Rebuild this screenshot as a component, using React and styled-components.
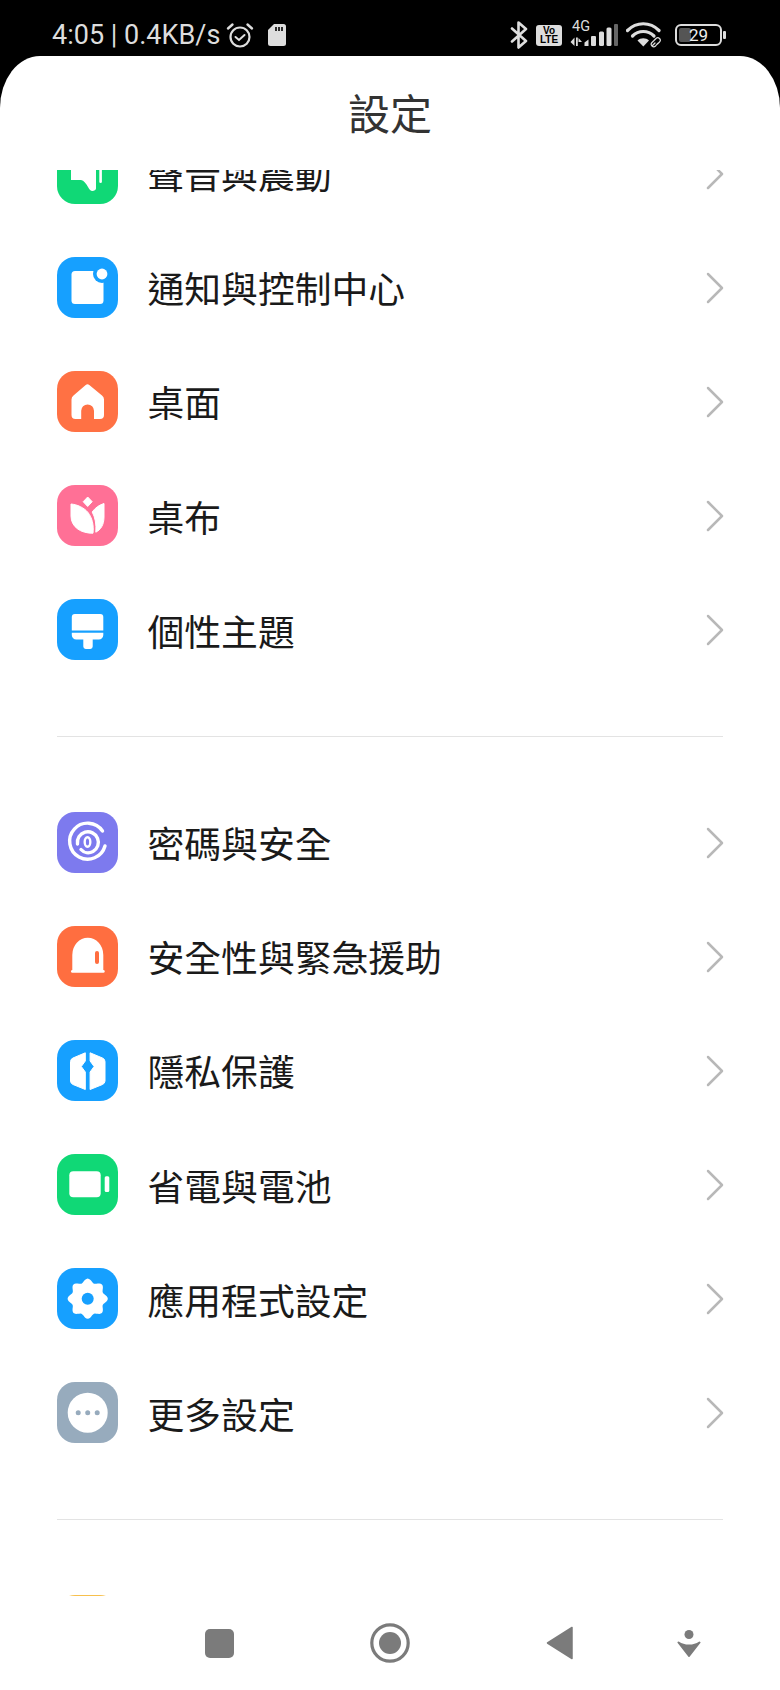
import React from 'react';
import styled, { createGlobalStyle } from 'styled-components';

const GlobalStyle = createGlobalStyle`
  html, body {
    margin: 0;
    padding: 0;
    background: #000;
  }
  * {
    box-sizing: border-box;
  }
`;

const CJK = `"Noto Sans CJK TC", "Noto Sans CJK SC", sans-serif`;

// eight lobed gear outline, used by the app settings icon
const gearPath = () => {
  const pts = [];
  for (let i = 0; i < 96; i++) {
    const a = (i / 96) * Math.PI * 2;
    const r = 18.2 + 1.9 * Math.cos(8 * a);
    pts.push(`${(30.7 + r * Math.sin(a)).toFixed(2)} ${(30.7 - r * Math.cos(a)).toFixed(2)}`);
  }
  return `M${pts.join('L')}Z`;
};

const icons = {
  sound: (
    <>
      <path d="M14 20H39V45.5C39 47 37 48 35.5 48C33.5 48 32.5 46.5 31 44C29 40.5 27 37.5 24 37H14Z" fill="#fff" />
      <rect x="42.3" y="20" width="2.6" height="20" rx="1.3" fill="#fff" />
    </>
  ),
  notify: (
    <>
      <rect x="14.5" y="14" width="32" height="33" rx="3.5" fill="#fff" />
      <circle cx="45" cy="17" r="9" fill="#16a0ff" />
      <circle cx="45" cy="17" r="5.4" fill="#fff" />
    </>
  ),
  home: (
    <path
      d="M28.7 14a3 3 0 0 1 3.6 0L45 24.5a5 5 0 0 1 2 4V44a4 4 0 0 1-4 4H37V39.8a6.4 6.4 0 0 0-12.8 0V48H18.5a4 4 0 0 1-4-4V28.5a5 5 0 0 1 2-4Z"
      fill="#fff"
    />
  ),
  tulip: (
    <>
      <path d="M14 19C20 19.500 27 22.500 31 27.500C35 32.500 37 40 36 48.200C24 48.500 14 42 14 31Z" fill="#fff" stroke="#fff" strokeLinejoin="round" />
      <path d="M47 18.500V32C47 40 43.500 45 38.800 47.200C39.500 39 38 32 35.200 27C38 23 42 20 47 18.500Z" fill="#fff" stroke="#fff" strokeLinejoin="round" />
      <path d="M30.700 12L35.200 16.700L30.700 21.500L26.200 16.700Z" fill="#fff" stroke="#fff" strokeLinejoin="round" />
    </>
  ),
  brush: (
    <>
      <path d="M18 15H43.300a3 3 0 0 1 3 3V31.500H14.800V18a3 3 0 0 1 3-3Z" fill="#fff" />
      <path d="M14.800 33.800H46.300V36a4.500 4.500 0 0 1-4.500 4.500H35.700V47.500a2.400 2.400 0 0 1-2.400 2.400H28.700a2.400 2.400 0 0 1-2.400-2.400V40.500H19.300A4.500 4.500 0 0 1 14.800 36Z" fill="#fff" />
    </>
  ),
  finger: (
    <g fill="none" stroke="#fff" strokeLinecap="round">
      <path d="M45.500 19A18 18 0 1 0 48 34" strokeWidth="3.400" />
      <path d="M20.500 32A10.500 10.500 0 1 1 36 39.500C32 41.500 27 41 24 37.500" strokeWidth="3.400" />
      <ellipse cx="30.500" cy="30" rx="2.800" ry="4.800" strokeWidth="2.400" />
    </g>
  ),
  siren: (
    <>
      <path d="M15.300 44.500V29A14 15.500 0 0 1 46.300 29V44.500Z" fill="#fff" />
      <rect x="14" y="44" width="33.700" height="2.800" rx="1.400" fill="#fff" />
      <rect x="38" y="25" width="4" height="13" rx="2" fill="#ff6e40" />
    </>
  ),
  privacy: (
    <>
      <path d="M28.300 12.800V21L24.300 26.500L28.300 32V49.500L16 44.500A4 4 0 0 1 13.500 41V21.500A4 4 0 0 1 16 18Z" fill="#fff" stroke="#fff" strokeLinejoin="round" />
      <path d="M33.100 12.800V21L37.100 26.500L33.100 32V49.500L45.500 44.500A4 4 0 0 0 48 41V21.500A4 4 0 0 0 45.500 18Z" fill="#fff" stroke="#fff" strokeLinejoin="round" />
    </>
  ),
  battery: (
    <>
      <rect x="12.300" y="17.300" width="31.400" height="26" rx="4" fill="#fff" />
      <rect x="47.700" y="22.300" width="4.600" height="15.700" rx="1.500" fill="#fff" />
    </>
  ),
  gear: (
    <>
      <path d={gearPath()} fill="#fff" />
      <circle cx="30.700" cy="30.700" r="6" fill="#16a0ff" />
    </>
  ),
  more: (
    <>
      <circle cx="30.700" cy="30.700" r="20" fill="#fff" />
      <circle cx="21.200" cy="30.700" r="2.500" fill="#97abbd" />
      <circle cx="30.700" cy="30.700" r="2.500" fill="#97abbd" />
      <circle cx="40.200" cy="30.700" r="2.500" fill="#97abbd" />
    </>
  ),
  wallet: <rect x="14" y="14" width="33" height="33" rx="4" fill="#fff" />,
};

const groups = [
  [
    { label: '聲音與震動', icon: 'sound', color: '#10d876' },
    { label: '通知與控制中心', icon: 'notify', color: '#16a0ff' },
    { label: '桌面', icon: 'home', color: '#ff7144' },
    { label: '桌布', icon: 'tulip', color: '#ff7096' },
    { label: '個性主題', icon: 'brush', color: '#16a0ff' },
  ],
  [
    { label: '密碼與安全', icon: 'finger', color: '#7d7aee' },
    { label: '安全性與緊急援助', icon: 'siren', color: '#ff6e40' },
    { label: '隱私保護', icon: 'privacy', color: '#16a0ff' },
    { label: '省電與電池', icon: 'battery', color: '#10d876' },
    { label: '應用程式設定', icon: 'gear', color: '#16a0ff' },
    { label: '更多設定', icon: 'more', color: '#97abbd' },
  ],
  [{ label: '', icon: 'wallet', color: '#f7c04d' }],
];

const App = () => (
  <>
    <GlobalStyle />
    <Page>
      <StatusBar>
        <StatusLeft>
          <StatusText>4:05 | 0.4KB/s</StatusText>
          <svg width="28" height="27" viewBox="0 0 28 27" fill="none" stroke="#ddd" strokeLinecap="round">
            <circle cx="14" cy="15" r="9.500" strokeWidth="2.200" />
            <path d="M9.500 15L13 18L18.500 13" strokeWidth="2" />
            <path d="M2 6.500L6.500 2.500M26 6.500L21.500 2.500" strokeWidth="2.400" />
          </svg>
          <SdCard width="18" height="22" viewBox="0 0 18 22">
            <path d="M6 0H15.500A2.500 2.500 0 0 1 18 2.500V19.500A2.500 2.500 0 0 1 15.500 22H2.500A2.500 2.500 0 0 1 0 19.500V6Z" fill="#ddd" />
            <path d="M8 3V7M11 3V7M14 3V7" stroke="#000" strokeWidth="1.600" />
          </SdCard>
        </StatusLeft>
        <StatusRight>
          <svg width="18" height="28" viewBox="0 0 18 28" fill="none" stroke="#ddd" strokeWidth="2.600" strokeLinejoin="round" strokeLinecap="round">
            <path d="M2 7.500L16 20L8.500 26.500V1.500L16 8L2 20.500" />
          </svg>
          <VoLte>
            <span>Vo</span>
            <span>LTE</span>
          </VoLte>
          <Signal>
            <SignalLabel>4G</SignalLabel>
            <svg width="48" height="24" viewBox="0 0 48 24">
              <path d="M4.500 13.500V22L0.500 18ZM6 13.500H7.800V22H6ZM8.500 14L12 18H8.500Z" fill="#ddd" />
              <path d="M14.500 22V18.500L18.500 15.500V22Z" fill="#ddd" />
              <rect x="21" y="12" width="5" height="10" rx="1" fill="#ddd" />
              <rect x="29" y="7.500" width="5" height="14.500" rx="1.500" fill="#ddd" />
              <rect x="36.500" y="3.500" width="5" height="18.500" rx="1.500" fill="#ddd" />
              <rect x="44" y="0" width="4" height="22" rx="1" fill="#666" />
            </svg>
          </Signal>
          <svg width="37" height="26" viewBox="0 0 37 26" fill="none">
            <path d="M1.500 8.500C10.500 -0.500 24 -0.500 33 8.500" stroke="#ddd" strokeWidth="3.200" strokeLinecap="round" />
            <path d="M6.500 14C12.500 8 22 8 28 14" stroke="#ddd" strokeWidth="3.200" strokeLinecap="round" />
            <path d="M11.500 18.500C14.500 15.500 20 15.500 23 18.500L17.300 24.500Z" fill="#ddd" />
            <path d="M26 24L29 21M28 18.500L30 16.500A2 2 0 0 1 33.500 20L31.500 22M31.500 21.500L29.500 24A2 2 0 0 1 26 20.500L27.500 19" stroke="#ddd" strokeWidth="1.200" strokeLinecap="round" />
          </svg>
          <Battery>
            <BatteryLevel />
            <BatteryValue>29</BatteryValue>
          </Battery>
        </StatusRight>
      </StatusBar>
      <Sheet>
        <Header>設定</Header>
        <Viewport>
          <ScrollBody>
            {groups.map((rows, g) => (
              <Group key={g}>
                {g > 0 && <Divider />}
                {rows.map((row) => (
                  <Row key={row.icon}>
                    <IconBox $color={row.color}>
                      <svg width="61" height="61" viewBox="0 0 61 61">{icons[row.icon]}</svg>
                    </IconBox>
                    <Label>{row.label}</Label>
                    <Chevron width="18" height="32" viewBox="0 0 18 32">
                      <path d="M2 2L16 16L2 30" />
                    </Chevron>
                  </Row>
                ))}
              </Group>
            ))}
          </ScrollBody>
        </Viewport>
        <NavBar>
          <NavSquare />
          <svg width="40" height="40" viewBox="0 0 40 40">
            <circle cx="20" cy="20" r="18.200" fill="none" stroke="#7b7b7b" strokeWidth="3.200" />
            <circle cx="20" cy="20" r="11" fill="#7b7b7b" />
          </svg>
          <svg width="27" height="34" viewBox="0 0 27 34">
            <path d="M26 1.500V32.500L1.500 17Z" fill="#7b7b7b" stroke="#7b7b7b" strokeWidth="1.500" strokeLinejoin="round" />
          </svg>
          <NavAssist width="24" height="27" viewBox="0 0 24 27">
            <ellipse cx="12" cy="4.500" rx="4.500" ry="4.500" fill="#7b7b7b" />
            <path d="M1.500 12.500C5 15 9 15.500 12 15.500C15 15.500 19 15 22.500 12.500L12 26Z" fill="#7b7b7b" stroke="#7b7b7b" strokeWidth="2" strokeLinejoin="round" />
          </NavAssist>
        </NavBar>
      </Sheet>
    </Page>
  </>
);

const Page = styled.div`
  width: 780px;
  height: 1690px;
  background: #000;
  display: flex;
  flex-direction: column;
  overflow: hidden;
`;

const StatusBar = styled.div`
  height: 56px;
  padding: 20px 58px 0 52px;
  display: flex;
  justify-content: space-between;
  align-items: flex-start;
  flex-shrink: 0;
`;

const StatusLeft = styled.div`
  display: flex;
  align-items: center;
  gap: 6px;
  height: 30px;
`;

const StatusText = styled.span`
  font-family: Roboto, sans-serif;
  font-size: 27px;
  line-height: 30px;
  color: #ddd;
  white-space: nowrap;
`;

const SdCard = styled.svg`
  margin-left: 8px;
`;

const StatusRight = styled.div`
  display: flex;
  align-items: center;
  gap: 8px;
  height: 30px;
`;

const VoLte = styled.div`
  width: 26px;
  height: 21px;
  border-radius: 3px;
  background: #ddd;
  color: #000;
  font-family: "Liberation Sans", sans-serif;
  font-size: 10px;
  font-weight: 700;
  line-height: 9.5px;
  display: flex;
  flex-direction: column;
  align-items: center;
  justify-content: center;
`;

const Signal = styled.div`
  position: relative;
  width: 48px;
  height: 26px;
  display: flex;
  align-items: flex-end;
`;

const SignalLabel = styled.span`
  position: absolute;
  left: 2px;
  top: -2px;
  font-family: Roboto, sans-serif;
  font-size: 14.5px;
  line-height: 14px;
  color: #ddd;
`;

const Battery = styled.div`
  position: relative;
  width: 47px;
  height: 22px;
  border: 2px solid #ddd;
  border-radius: 6px;
  margin-left: 4px;
  display: flex;
  align-items: center;
  justify-content: center;

  &::after {
    content: '';
    position: absolute;
    right: -6px;
    top: 5px;
    width: 3px;
    height: 8px;
    border-radius: 1px;
    background: #ddd;
  }
`;

const BatteryLevel = styled.div`
  position: absolute;
  left: 2px;
  top: 2px;
  bottom: 2px;
  width: 12px;
  border-radius: 2px;
  background: #555;
`;

const BatteryValue = styled.span`
  position: relative;
  font-family: Roboto, sans-serif;
  font-size: 17px;
  line-height: 18px;
  color: #eee;
`;

const Sheet = styled.div`
  flex: 1;
  min-height: 0;
  background: #fff;
  border-radius: 40px 40px 0 0 / 52px 52px 0 0;
  display: flex;
  flex-direction: column;
  overflow: hidden;
`;

const Header = styled.div`
  height: 114px;
  padding-bottom: 4px;
  flex-shrink: 0;
  display: flex;
  align-items: center;
  justify-content: center;
  font-family: ${CJK};
  font-size: 42px;
  color: #333;
`;

const Viewport = styled.div`
  flex: 1;
  min-height: 0;
  overflow: hidden;
`;

const ScrollBody = styled.div`
  margin-top: -54px;
`;

const Group = styled.div`
  display: flex;
  flex-direction: column;
`;

const Divider = styled.div`
  height: 1px;
  margin: 49px 57px 48px;
  background: #e3e3e3;
`;

const Row = styled.div`
  height: 114.2px;
  padding: 0 57px;
  display: flex;
  align-items: center;
`;

const IconBox = styled.div`
  width: 61px;
  height: 61px;
  border-radius: 18px;
  background: ${(p) => p.$color};
  flex-shrink: 0;
  display: flex;
`;

const Label = styled.span`
  flex: 1;
  margin-left: 29.5px;
  font-family: ${CJK};
  font-size: 36.8px;
  color: #1a1a1a;
  white-space: nowrap;
`;

const Chevron = styled.svg`
  fill: none;
  stroke: #b8b8b8;
  stroke-width: 2.5px;
  stroke-linecap: round;
  stroke-linejoin: round;
  margin: 1px -1px 0 0;
`;

const NavBar = styled.div`
  height: 94px;
  flex-shrink: 0;
  background: #fff;
  padding-left: 205px;
  display: flex;
  align-items: center;
  gap: 136px;
`;

const NavSquare = styled.div`
  width: 29px;
  height: 29px;
  border-radius: 5px;
  background: #7b7b7b;
`;

const NavAssist = styled.svg`
  margin-left: -32px;
`;

export default App;
